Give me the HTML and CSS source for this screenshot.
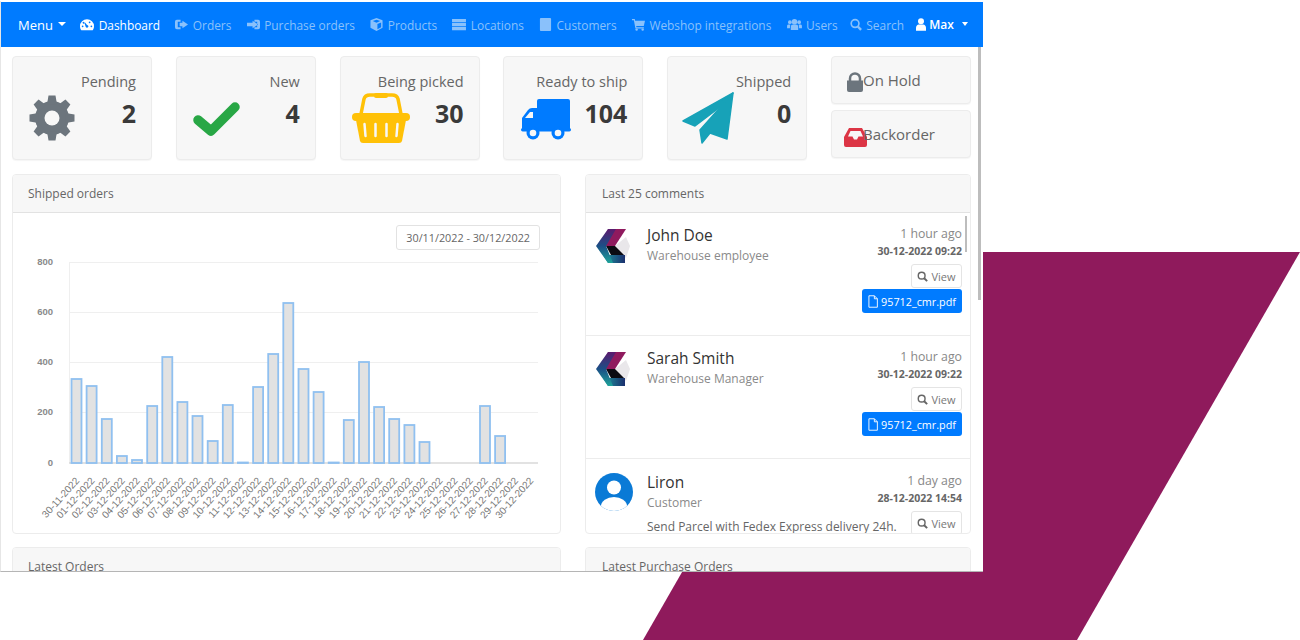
FILE: index.html
```html
<!DOCTYPE html>
<html lang="en">
<head>
<meta charset="utf-8">
<title>Dashboard</title>
<link rel="stylesheet" href="styles.css">
</head>
<body>
<svg class="shape" viewBox="0 0 1300 640" aria-hidden="true"><polygon points="866,252 1300,252 1077,640 643,640"/></svg>
<div class="window">
  <nav class="nav">
    <span class="nav-item on nav-first">Menu<i class="caret"></i></span>
    <span class="nav-item on"><svg class="ni ni-wide" viewBox="0 0 16 14"><path fill-rule="evenodd" d="M8 1a8 8 0 0 0-8 8c0 2 .6 3.500 1.500 4.500h13C15.400 12.500 16 11 16 9a8 8 0 0 0-8-8zM8 7.500a1.600 1.600 0 1 1-1.400 2.400L5 5l1 0 2 2.500zM3 8a1 1 0 1 1 0 2 1 1 0 0 1 0-2zm2-3a1 1 0 1 1 0-.1zM11 3.500a1 1 0 1 1 0 2 1 1 0 0 1 0-2zM13 8a1 1 0 1 1 0 2 1 1 0 0 1 0-2z"/></svg>Dashboard</span>
    <span class="nav-item"><svg class="ni" viewBox="0 0 14 14"><path d="M2 2h4v2H3v6h3v2H2a2 2 0 0 1-2-2V4a2 2 0 0 1 2-2zM8 3l6 4-6 4V9H5V5h3z"/></svg>Orders</span>
    <span class="nav-item"><svg class="ni" viewBox="0 0 14 14"><path d="M12 2H8v2h3v6H8v2h4a2 2 0 0 0 2-2V4a2 2 0 0 0-2-2zM6 3l6 4-6 4V9H0V5h6z"/></svg>Purchase orders</span>
    <span class="nav-item"><svg class="ni" viewBox="0 0 14 14"><path d="M7 0l6.500 2.500v8L7 14 .5 10.500v-8zM7 2L3 3.300 7 5l4-1.700zM8 6.500V12l4-2V4.800z"/></svg>Products</span>
    <span class="nav-item"><svg class="ni ni-wide" viewBox="0 0 15 14"><path d="M0 1h15v3.500H0zM0 5.300h15v3.500H0zM0 9.600h15v3.500H0z"/></svg>Locations</span>
    <span class="nav-item"><svg class="ni" viewBox="0 0 12 14"><path d="M1 0h10a1 1 0 0 1 1 1v12a1 1 0 0 1-1 1H1a1 1 0 0 1-1-1V1a1 1 0 0 1 1-1z"/></svg>Customers</span>
    <span class="nav-item"><svg class="ni" viewBox="0 0 14 14"><path d="M0 1h3l.4 2H14l-1.300 5.500H4.500l.3 1.500h8v1.300H3.700L2 2.300H0z"/><circle cx="5" cy="12.500" r="1.300"/><circle cx="11.500" cy="12.500" r="1.300"/></svg>Webshop integrations</span>
    <span class="nav-item"><svg class="ni ni-users" viewBox="0 0 16 14"><circle cx="8" cy="4" r="3"/><circle cx="3" cy="4.500" r="2"/><circle cx="13" cy="4.500" r="2"/><path d="M4 13V9.500A2.500 2.500 0 0 1 6.500 7h3A2.500 2.500 0 0 1 12 9.500V13zM0 11V8.500C0 7.500 1 7 2 7h1.500L3 11zM16 11V8.500C16 7.500 15 7 14 7h-1.500l.5 4z"/></svg>Users</span>
    <span class="nav-item nav-tight"><svg class="ni ni-search" viewBox="0 0 13 14"><circle cx="5.500" cy="6" r="4.200" class="ring"/><path d="M8.500 9.200l3.500 3.600" class="ring thick"/></svg>Search</span>
    <span class="nav-item on nav-tight nav-user"><svg class="ni-user" viewBox="0 0 11 14"><circle cx="5.500" cy="3.500" r="3.300"/><path d="M0 14v-3.500C0 8.500 1.500 7 3 7h5c1.500 0 3 1.500 3 3.500V14z"/></svg>Max<i class="caret caret-user"></i></span>
  </nav>

  <main class="content">
    <section class="stats">
      <div class="card stat">
        <svg class="stat-icon" viewBox="0 0 60 60"><g fill="#6c757d"><circle cx="29" cy="29" r="17"/><path d="M25.500 6.500h7l1.500 9h-10z"/><path d="M25.500 6.500h7l1.500 9h-10z" transform="rotate(45 29 29)"/><path d="M25.500 6.500h7l1.500 9h-10z" transform="rotate(90 29 29)"/><path d="M25.500 6.500h7l1.500 9h-10z" transform="rotate(135 29 29)"/><path d="M25.500 6.500h7l1.500 9h-10z" transform="rotate(180 29 29)"/><path d="M25.500 6.500h7l1.500 9h-10z" transform="rotate(225 29 29)"/><path d="M25.500 6.500h7l1.500 9h-10z" transform="rotate(270 29 29)"/><path d="M25.500 6.500h7l1.500 9h-10z" transform="rotate(315 29 29)"/></g><circle cx="29" cy="29" r="7.500" fill="#f7f7f7"/></svg>
        <div class="stat-text"><div class="stat-title">Pending</div><div class="stat-num">2</div></div>
      </div>
      <div class="card stat">
        <svg class="stat-icon" viewBox="0 0 60 60"><path d="M11 31l13 11 24-24" fill="none" stroke="#28a745" stroke-width="9.500" stroke-linejoin="round" stroke-linecap="round"/></svg>
        <div class="stat-text"><div class="stat-title">New</div><div class="stat-num">4</div></div>
      </div>
      <div class="card stat">
        <svg class="stat-icon" viewBox="0 0 60 60"><path d="M10 25l3-15q1-4 6-4h22q5 0 6 4l3 15" fill="none" stroke="#ffc107" stroke-width="3.500"/><rect x="23" y="4" width="14" height="5" rx="2" fill="#ffc107"/><rect x="1" y="24" width="58" height="8" rx="4" fill="#ffc107"/><path d="M5 31h50l-4 21q-.5 2-3 2H12q-2.500 0-3-2z" fill="#ffc107"/><path d="M13.500 35l1 12M24.500 35v12M35.500 35v12M46.500 35l-1 12" stroke="#f7f7f7" stroke-width="2.500" stroke-linecap="round"/></svg>
        <div class="stat-text"><div class="stat-title">Being picked</div><div class="stat-num">30</div></div>
      </div>
      <div class="card stat">
        <svg class="stat-icon" viewBox="0 0 60 60"><g fill="#007bff"><rect x="23" y="10" width="33" height="32" rx="2"/><path d="M21 19h3v23H8V29l6-8q1.500-2 4-2zM19 23h-3l-5 6h8z" fill-rule="evenodd"/><rect x="7" y="39" width="50" height="3.500" rx="1.700"/><circle cx="19" cy="44" r="6.500"/><circle cx="44" cy="44" r="6.500"/></g><circle cx="19" cy="44" r="3.300" fill="#f7f7f7"/><circle cx="44" cy="44" r="3.300" fill="#f7f7f7"/></svg>
        <div class="stat-text"><div class="stat-title">Ready to ship</div><div class="stat-num">104</div></div>
      </div>
      <div class="card stat">
        <svg class="stat-icon" viewBox="0 0 60 60"><g fill="#17a2b8" stroke="#17a2b8" stroke-width="1.500" stroke-linejoin="round"><path d="M55 4L5 32l12 5 29-22z"/><path d="M55 4L22 41l2 13 8-10 17 6z"/></g></svg>
        <div class="stat-text"><div class="stat-title">Shipped</div><div class="stat-num">0</div></div>
      </div>
      <div class="side-stack">
        <div class="card side"><svg class="side-icon" viewBox="0 0 16 20"><path d="M0 8.500h16V18a2 2 0 0 1-2 2H2a2 2 0 0 1-2-2z" fill="#6c757d"/><path d="M3 9V6.500a5 5 0 0 1 10 0V9" fill="none" stroke="#6c757d" stroke-width="2.500"/></svg>On Hold</div>
        <div class="card side side-red"><svg class="side-icon side-inbox" viewBox="0 0 23 19"><path fill-rule="evenodd" d="M5 0h13l5 9v8a2 2 0 0 1-2 2H2a2 2 0 0 1-2-2V9zM6.500 3L4 8.500h4.500l1.500 3h3l1.500-3H19L16.500 3z" fill="#dc3545"/></svg>Backorder</div>
      </div>
    </section>

    <section class="panels">
      <div class="panel panel-left">
        <header class="panel-head">Shipped orders</header>
        <div class="panel-body chart-body">
          <div class="date-row"><span class="date-btn">30/11/2022 - 30/12/2022</span></div>
          <svg class="chart" viewBox="13 255 547 278">
            <g class="grid"><path d="M69 263.500H538M69 313.500H538M69 363.500H538M69 413.500H538M69.500 263V464"/></g>
            <path class="axis" d="M69 464H538"/>
            <g class="ylab"><text x="53" y="266">800</text><text x="53" y="316">600</text><text x="53" y="366">400</text><text x="53" y="416">200</text><text x="53" y="467">0</text></g>
            <g class="bars">
              <rect x="71.500" y="380" width="10" height="84"/><rect x="86.600" y="387" width="10" height="77"/><rect x="101.800" y="420" width="10" height="44"/><rect x="116.900" y="457" width="10" height="7"/><rect x="132" y="461" width="10" height="3"/><rect x="147.200" y="407" width="10" height="57"/><rect x="162.300" y="358" width="10" height="106"/><rect x="177.400" y="403" width="10" height="61"/><rect x="192.500" y="417" width="10" height="47"/><rect x="207.700" y="442" width="10" height="22"/><rect x="222.800" y="406" width="10" height="58"/><rect x="237.900" y="463.500" width="10" height=".5"/><rect x="253.100" y="388" width="10" height="76"/><rect x="268.200" y="355" width="10" height="109"/><rect x="283.300" y="304" width="10" height="160"/><rect x="298.500" y="370" width="10" height="94"/><rect x="313.600" y="393" width="10" height="71"/><rect x="328.700" y="463.500" width="10" height=".5"/><rect x="343.800" y="421" width="10" height="43"/><rect x="359" y="363" width="10" height="101"/><rect x="374.100" y="408" width="10" height="56"/><rect x="389.200" y="420" width="10" height="44"/><rect x="404.400" y="426" width="10" height="38"/><rect x="419.500" y="443" width="10" height="21"/><rect x="480" y="407" width="10" height="57"/><rect x="495.100" y="437" width="10" height="27"/>
            </g>
            <g class="xlab">
              <text transform="translate(80 482) rotate(-48)">30-11-2022</text><text transform="translate(95.100 482) rotate(-48)">01-12-2022</text><text transform="translate(110.300 482) rotate(-48)">02-12-2022</text><text transform="translate(125.400 482) rotate(-48)">03-12-2022</text><text transform="translate(140.500 482) rotate(-48)">04-12-2022</text><text transform="translate(155.700 482) rotate(-48)">05-12-2022</text><text transform="translate(170.800 482) rotate(-48)">06-12-2022</text><text transform="translate(185.900 482) rotate(-48)">07-12-2022</text><text transform="translate(201 482) rotate(-48)">08-12-2022</text><text transform="translate(216.200 482) rotate(-48)">09-12-2022</text><text transform="translate(231.300 482) rotate(-48)">10-12-2022</text><text transform="translate(246.400 482) rotate(-48)">11-12-2022</text><text transform="translate(261.600 482) rotate(-48)">12-12-2022</text><text transform="translate(276.700 482) rotate(-48)">13-12-2022</text><text transform="translate(291.800 482) rotate(-48)">14-12-2022</text><text transform="translate(307 482) rotate(-48)">15-12-2022</text><text transform="translate(322.100 482) rotate(-48)">16-12-2022</text><text transform="translate(337.200 482) rotate(-48)">17-12-2022</text><text transform="translate(352.300 482) rotate(-48)">18-12-2022</text><text transform="translate(367.500 482) rotate(-48)">19-12-2022</text><text transform="translate(382.600 482) rotate(-48)">20-12-2022</text><text transform="translate(397.700 482) rotate(-48)">21-12-2022</text><text transform="translate(412.900 482) rotate(-48)">22-12-2022</text><text transform="translate(428 482) rotate(-48)">23-12-2022</text><text transform="translate(443.100 482) rotate(-48)">24-12-2022</text><text transform="translate(458.300 482) rotate(-48)">25-12-2022</text><text transform="translate(473.400 482) rotate(-48)">26-12-2022</text><text transform="translate(488.500 482) rotate(-48)">27-12-2022</text><text transform="translate(503.600 482) rotate(-48)">28-12-2022</text><text transform="translate(518.800 482) rotate(-48)">29-12-2022</text><text transform="translate(533.900 482) rotate(-48)">30-12-2022</text>
            </g>
          </svg>
        </div>
      </div>

      <div class="panel panel-right">
        <header class="panel-head">Last 25 comments</header>
        <div class="panel-body comments">
          <i class="thumb thumb-in"></i>
          <article class="comment">
            <svg class="avatar" viewBox="0 0 34 35"><use href="#logo"/></svg>
            <div class="who"><div class="name">John Doe</div><div class="role">Warehouse employee</div></div>
            <div class="meta"><div class="ago">1 hour ago</div><div class="when">30-12-2022 09:22</div>
              <span class="btn-view"><svg class="btn-i" viewBox="0 0 13 13"><circle cx="5.500" cy="5.500" r="4" class="ring-g"/><path d="M8.500 8.500L12 12" class="ring-g thick"/></svg>View</span>
              <span class="btn-pdf"><svg class="btn-f" viewBox="0 0 11 14"><path d="M1 .7h6l3.300 3.300v9.300H1zM7 .7V4h3.300" fill="none" stroke="#fff"/></svg>95712_cmr.pdf</span></div>
          </article>
          <article class="comment">
            <svg class="avatar" viewBox="0 0 34 35"><use href="#logo"/></svg>
            <div class="who"><div class="name">Sarah Smith</div><div class="role">Warehouse Manager</div></div>
            <div class="meta"><div class="ago">1 hour ago</div><div class="when">30-12-2022 09:22</div>
              <span class="btn-view"><svg class="btn-i" viewBox="0 0 13 13"><circle cx="5.500" cy="5.500" r="4" class="ring-g"/><path d="M8.500 8.500L12 12" class="ring-g thick"/></svg>View</span>
              <span class="btn-pdf"><svg class="btn-f" viewBox="0 0 11 14"><path d="M1 .7h6l3.300 3.300v9.300H1zM7 .7V4h3.300" fill="none" stroke="#fff"/></svg>95712_cmr.pdf</span></div>
          </article>
          <article class="comment comment-last">
            <svg class="avatar avatar-user" viewBox="0 0 38 38"><defs><clipPath id="disc"><circle cx="19" cy="19" r="19"/></clipPath></defs><circle cx="19" cy="19" r="19" fill="#0a7ad6"/><g clip-path="url(#disc)" fill="#fff"><circle cx="19" cy="14.500" r="7"/><ellipse cx="19" cy="33" rx="13" ry="9"/></g></svg>
            <div class="who"><div class="name">Liron</div><div class="role">Customer</div><div class="msg">Send Parcel with Fedex Express delivery 24h.</div></div>
            <div class="meta"><div class="ago">1 day ago</div><div class="when">28-12-2022 14:54</div>
              <span class="btn-view"><svg class="btn-i" viewBox="0 0 13 13"><circle cx="5.500" cy="5.500" r="4" class="ring-g"/><path d="M8.500 8.500L12 12" class="ring-g thick"/></svg>View</span></div>
          </article>
        </div>
      </div>

      <div class="panel panel-left"><header class="panel-head">Latest Orders</header></div>
      <div class="panel panel-right"><header class="panel-head">Latest Purchase Orders</header></div>
    </section>
  </main>
  <i class="thumb thumb-page"></i>
</div>
<svg class="defs" aria-hidden="true"><defs>
  <linearGradient id="lg" x1="0" y1="0" x2="0" y2="1"><stop offset="0" stop-color="#5b1a6e"/><stop offset=".5" stop-color="#1b4f86"/><stop offset="1" stop-color="#1fa39a"/></linearGradient>
  <linearGradient id="bg" x1="0" y1="0" x2="1" y2="0"><stop offset="0" stop-color="#1f9aa0"/><stop offset="1" stop-color="#1b2f6e"/></linearGradient>
  <g id="logo">
    <polygon points="30,9 34,18 30,30 19,18" fill="#e9e7ea"/>
    <polygon points="12,1 30,1 19,18 8,18" fill="#8f1a5e"/>
    <polygon points="10,18 19,18 28,27 15,27" fill="#0b0b12"/>
    <polygon points="12,27 29,27 29,35 12,35 7,27" fill="url(#bg)"/>
    <polygon points="12,1 20,1 10,18 17,35 12,35 0,18" fill="url(#lg)"/>
  </g>
</defs></svg>
</body>
</html>
```

FILE: styles.css
```css
* { box-sizing: border-box; }
html, body { margin: 0; height: 640px; overflow: hidden; background: #fff; }
body { font-family: "Open Sans", "Liberation Sans", sans-serif; color: #555; position: relative; }

.shape { position: absolute; left: 0; top: 0; width: 1300px; height: 640px; }
.shape polygon { fill: #8f1a5c; }
.defs { position: absolute; width: 0; height: 0; }

.window { position: relative; width: 983px; height: 571px; margin-top: 1px; background: #fff; overflow: hidden; border-left: 1px solid #e6e6e6; border-bottom: 1px solid #b5b5b5; }

.nav { height: 45px; margin-top: 1px; background: #007bff; display: flex; align-items: center; gap: 15.250px; padding-left: 17px; font-size: 11.900px; color: #8ac1fb; white-space: nowrap; }
.nav-item { display: flex; align-items: center; }
.nav-item.on { color: #fff; }
.nav-first { font-size: 13px; margin-right: -1px; }
.nav-tight { margin-left: -3px; }
.nav-user { font-size: 12px; font-weight: 600; }
.ni { width: 13px; height: 13px; margin-right: 4.500px; fill: currentColor; }
.ni-wide { width: 14px; }
.ni-users { width: 15px; }
.ni-search { width: 12px; }
.ni-user { width: 10px; height: 13px; margin-right: 3px; fill: currentColor; }
.ring { fill: none; stroke: currentColor; stroke-width: 1.800; }
.ring.thick { stroke-width: 2.600; }
.caret { width: 0; height: 0; margin-left: 5px; margin-top: -2px; border: 4.500px solid transparent; border-top-color: #fff; border-bottom-width: 0; }
.caret-user { margin-left: 8px; border-width: 4px 3.500px 0; }

.content { padding: 9px 11px 0 11px; }
.stats { display: grid; grid-template-columns: repeat(6, 140px); column-gap: 23.800px; }
.card { background: #f7f7f7; border: 1px solid #ececec; border-radius: 4px; box-shadow: 0 1px 1px rgba(0,0,0,.04); }
.stat { height: 104px; display: flex; justify-content: space-between; padding: 0 15px 0 10px; }
.stat-icon { width: 60px; height: 60px; flex: none; margin-top: 32px; margin-right: -60px; }
.stat-text { text-align: right; padding-top: 14px; white-space: nowrap; }
.stat-title { font-size: 14.500px; line-height: 22px; color: #666; }
.stat-num { font-size: 25px; line-height: 34px; margin-top: 3px; font-weight: 700; color: #3a3a3a; }

.side-stack { display: flex; flex-direction: column; gap: 6px; }
.side { height: 48px; display: flex; align-items: center; padding-left: 15px; font-size: 15px; color: #666; }
.side-icon { width: 16px; height: 20px; flex: none; margin-top: 4px; }
.side-red { padding-left: 12px; }
.side-inbox { width: 23px; height: 19px; margin-top: 6px; margin-right: -4px; }

.panels { display: grid; grid-template-columns: 549px 386px; column-gap: 24px; row-gap: 13px; margin-top: 14px; }
.panel { border: 1px solid #ececec; border-radius: 4px; background: #fff; overflow: hidden; }
.panel-head { height: 38px; background: #f7f7f7; border-bottom: 1px solid #e2e2e2; padding: 10px 16px; font-size: 12px; line-height: 18px; color: #666; }
.panel-left .panel-head { padding-left: 15px; }
.panel-body { height: 320px; position: relative; }
.chart-body { padding-top: 12px; }
.date-row { display: flex; justify-content: flex-end; padding-right: 20px; }
.date-btn { height: 25px; padding: 0 9px; border: 1px solid #e2e2e2; border-radius: 3px; font-size: 10.800px; line-height: 23px; color: #666; }
.chart { display: block; width: 547px; height: 278px; margin-top: 4px; }
.grid path { fill: none; stroke: #efefef; stroke-width: 1; }
.axis { stroke: #d8d8d8; stroke-width: 1.500; fill: none; }
.ylab text { font: 700 9.500px "Liberation Sans", sans-serif; fill: #8a8a8a; text-anchor: end; }
.xlab text { font: 400 10px "Liberation Sans", sans-serif; fill: #777; text-anchor: end; }
.bars rect { fill: #e2e2e2; stroke: #90c0f0; stroke-width: 1.800; }

.comments { overflow: hidden; }
.comment { height: 123px; display: flex; padding: 15px 8px 0 10px; border-bottom: 1px solid #ececec; }
.comment-last { height: auto; padding-top: 16px; border-bottom: 0; }
.avatar { width: 34px; height: 35px; flex: none; margin-right: 17px; }
.avatar-user { width: 38px; height: 38px; margin: -2px 14px 0 -1px; }
.who { flex: 1; min-width: 0; white-space: nowrap; margin-top: -1px; }
.comment-last .who { margin-top: -2px; }
.name { font-size: 15.500px; line-height: 17px; font-weight: 500; color: #333; }
.role { font-size: 12px; line-height: 18px; margin-top: 3px; color: #8a8a8a; }
.msg { font-size: 12px; line-height: 18px; margin-top: 6px; color: #666; }
.comment-last .name { padding-top: 1px; }
.meta { display: flex; flex-direction: column; align-items: flex-end; margin-top: -3px; flex: none; }
.ago { font-size: 12.300px; line-height: 18px; color: #888; }
.when { font-size: 10.500px; line-height: 17px; font-weight: 700; color: #666; }
.btn-view { height: 24px; width: 51px; margin-top: 4px; display: flex; align-items: center; justify-content: center; border: 1px solid #e4e4e4; border-radius: 3px; background: #fff; font-size: 11px; color: #777; }
.btn-i { width: 11px; height: 11px; margin-right: 3px; }
.ring-g { fill: none; stroke: #666; stroke-width: 1.700; }
.ring-g.thick { stroke-width: 2.300; }
.btn-pdf { height: 24px; width: 100px; margin-top: 1px; display: flex; align-items: center; justify-content: center; background: #007bff; border-radius: 3px; font-size: 10.800px; font-weight: 500; color: #fff; }
.btn-f { width: 10px; height: 13px; margin-right: 3px; }

.thumb { position: absolute; background: #bdbdbd; }
.thumb-in { right: 3px; top: 3px; width: 2px; height: 36px; }
.thumb-page { left: 977px; top: 46px; width: 3px; height: 253px; }
```
